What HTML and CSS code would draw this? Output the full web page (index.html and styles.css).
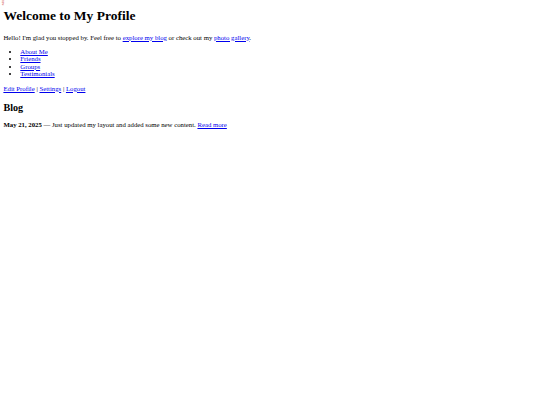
FILE: index.html
```html
<!DOCTYPE html>
<html>
<head>
<meta charset="utf-8">
<title>My Profile</title>
<link rel="stylesheet" href="styles.css">
</head>
<body>
<span class="marker">new</span>
<h1 class="title">Welcome to My Profile</h1>
<p class="intro">Hello! I'm glad you stopped by. Feel free to <a href="#">explore my blog</a> or check out my <a href="#">photo gallery</a>.</p>
<ul class="nav">
<li><a href="#">About Me</a></li>
<li><a href="#">Friends</a></li>
<li><a href="#">Groups</a></li>
<li><a href="#">Testimonials</a></li>
</ul>
<p class="actions"><a href="#">Edit Profile</a> | <a href="#">Settings</a> | <a href="#">Logout</a></p>
<h2 class="section">Blog</h2>
<p class="entry"><strong>May 21, 2025</strong> — Just updated my layout and added some new content. <a href="#">Read more</a></p>
</body>
</html>
```
FILE: styles.css
```css
body {
  margin: 0 3.4px;
  font-family: "Liberation Serif", "Times New Roman", serif;
  font-size: 6.75px;
  line-height: 7.45px;
  color: #000;
  background: #fff;
}
.marker {
  position: absolute;
  left: 0;
  top: 0;
  font-size: 3.5px;
  line-height: 1;
  color: #d04040;
  writing-mode: vertical-rl;
}
.title {
  font-size: 13.5px;
  line-height: 15.5px;
  margin: 8.2px 0 9.9px;
}
.intro {
  margin: 0 0 6.75px;
}
.nav {
  margin: 6.75px 0;
  padding-left: 16.9px;
}
.actions {
  margin: 7px 0;
}
.section {
  font-size: 10.125px;
  line-height: 11.6px;
  margin: 9.5px 0 7.5px;
}
.entry {
  margin: 7.5px 0;
}
a {
  color: #0000ee;
}
```
